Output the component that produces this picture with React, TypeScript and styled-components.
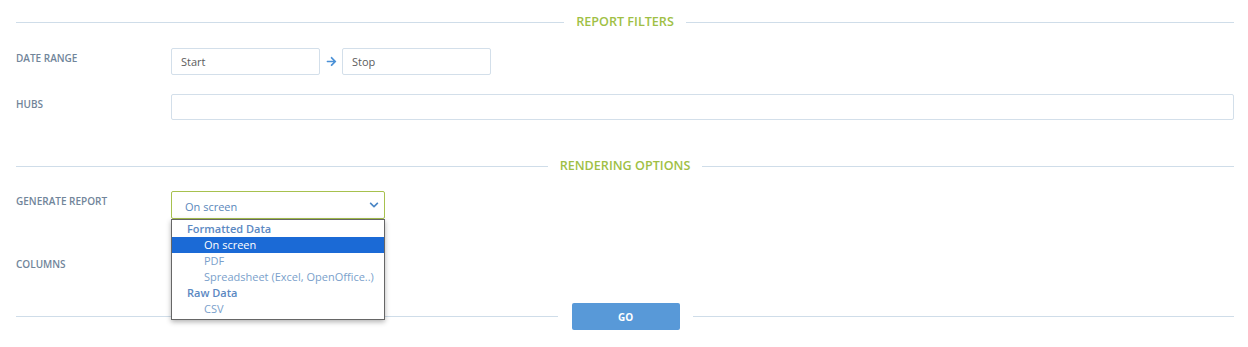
import React from 'react';
import styled, { createGlobalStyle } from 'styled-components';
import { FaArrowRight, FaChevronDown } from 'react-icons/fa';

const GlobalStyle = createGlobalStyle`
  body {
    margin: 0;
    background: #fff;
    font-family: 'Open Sans', 'Noto Sans', sans-serif;
  }
`;

const Page = styled.div`
  padding: 0 14px 0 16px;
`;

const Divider = styled.div<{ $top: number }>`
  display: flex;
  align-items: center;
  height: 14px;
  margin-top: ${p => p.$top}px;
`;

const Line = styled.div`
  flex: 1;
  height: 1px;
  background: #cfdde9;
`;

const SectionTitle = styled.span`
  padding: 0 12px;
  font-size: 12.6px;
  font-weight: 600;
  line-height: 14px;
  color: #a0bf45;
  text-transform: uppercase;
`;

const Row = styled.div<{ $top: number }>`
  display: grid;
  grid-template-columns: 155px 1fr;
  align-items: start;
  margin-top: ${p => p.$top}px;
`;

const Label = styled.label`
  padding-top: 4px;
  font-size: 10px;
  font-weight: 600;
  line-height: 12px;
  color: #71859a;
  text-transform: uppercase;
`;

const Controls = styled.div`
  position: relative;
  display: flex;
  align-items: center;
`;

const TextInput = styled.input<{ $width?: number; $height: number }>`
  box-sizing: border-box;
  width: ${p => (p.$width ? `${p.$width}px` : '100%')};
  height: ${p => p.$height}px;
  padding: 0 9px;
  border: 1px solid #d3dfea;
  border-radius: 2px;
  font-family: inherit;
  font-size: 11px;
  color: #555;
  outline: none;

  &::placeholder {
    color: #5c5c5c;
  }
`;

const ArrowIcon = styled.span`
  display: flex;
  width: 22px;
  justify-content: center;
  color: #4a90d6;
  font-size: 11px;
`;

const Select = styled.div`
  box-sizing: border-box;
  width: 214px;
  height: 28px;
  display: flex;
  align-items: center;
  justify-content: space-between;
  padding: 2px 5px 0 13px;
  border: 1px solid #a7c14e;
  border-radius: 2px;
  font-size: 11px;
  color: #5a87bb;

  svg {
    color: #4a86c5;
    font-size: 10px;
    margin-top: -3px;
  }
`;

const Menu = styled.ul`
  position: absolute;
  top: 28px;
  left: 0;
  z-index: 2;
  box-sizing: border-box;
  width: 214px;
  margin: 0;
  padding: 1px 0 2px;
  list-style: none;
  background: #fff;
  border: 1px solid #666;
  box-shadow: 0 2px 5px rgba(0, 0, 0, 0.3);
`;

const MenuItem = styled.li<{ $group?: boolean; $active?: boolean }>`
  height: 16px;
  line-height: 16px;
  padding-left: ${p => (p.$group ? 15 : 32)}px;
  font-size: 11px;
  font-weight: ${p => (p.$group ? 600 : 400)};
  color: ${p => (p.$active ? '#fff' : p.$group ? '#5b88c2' : '#7a9fcb')};
  background: ${p => (p.$active ? '#1b6ad6' : 'transparent')};
  white-space: nowrap;
`;

const Footer = styled.div`
  display: flex;
  align-items: center;
  margin-top: 33px;
`;

const GoButton = styled.button`
  width: 108px;
  height: 27px;
  margin: 0 13px 0 14px;
  border: none;
  border-radius: 2px;
  background: #5899d8;
  color: #fff;
  font-family: inherit;
  font-size: 10px;
  font-weight: 700;
  cursor: pointer;
`;

const options = [
  { label: 'Formatted Data', group: true },
  { label: 'On screen', active: true },
  { label: 'PDF' },
  { label: 'Spreadsheet (Excel, OpenOffice..)' },
  { label: 'Raw Data', group: true },
  { label: 'CSV' },
];

export default function App() {
  return (
    <Page>
      <GlobalStyle />
      <Divider $top={15}>
        <Line />
        <SectionTitle>Report Filters</SectionTitle>
        <Line />
      </Divider>

      <Row $top={19}>
        <Label>Date Range</Label>
        <Controls>
          <TextInput $width={149} $height={27} placeholder="Start" />
          <ArrowIcon>
            <FaArrowRight />
          </ArrowIcon>
          <TextInput $width={149} $height={27} placeholder="Stop" />
        </Controls>
      </Row>

      <Row $top={19}>
        <Label>Hubs</Label>
        <Controls>
          <TextInput $height={26} />
        </Controls>
      </Row>

      <Divider $top={39}>
        <Line />
        <SectionTitle>Rendering Options</SectionTitle>
        <Line />
      </Divider>

      <Row $top={18}>
        <Label>Generate Report</Label>
        <Controls>
          <Select>
            <span>On screen</span>
            <FaChevronDown />
          </Select>
          <Menu>
            {options.map(o => (
              <MenuItem key={o.label} $group={o.group} $active={o.active}>
                {o.label}
              </MenuItem>
            ))}
          </Menu>
        </Controls>
      </Row>

      <Row $top={35}>
        <Label>Columns</Label>
        <Controls />
      </Row>

      <Footer>
        <Line />
        <GoButton>GO</GoButton>
        <Line />
      </Footer>
    </Page>
  );
}
